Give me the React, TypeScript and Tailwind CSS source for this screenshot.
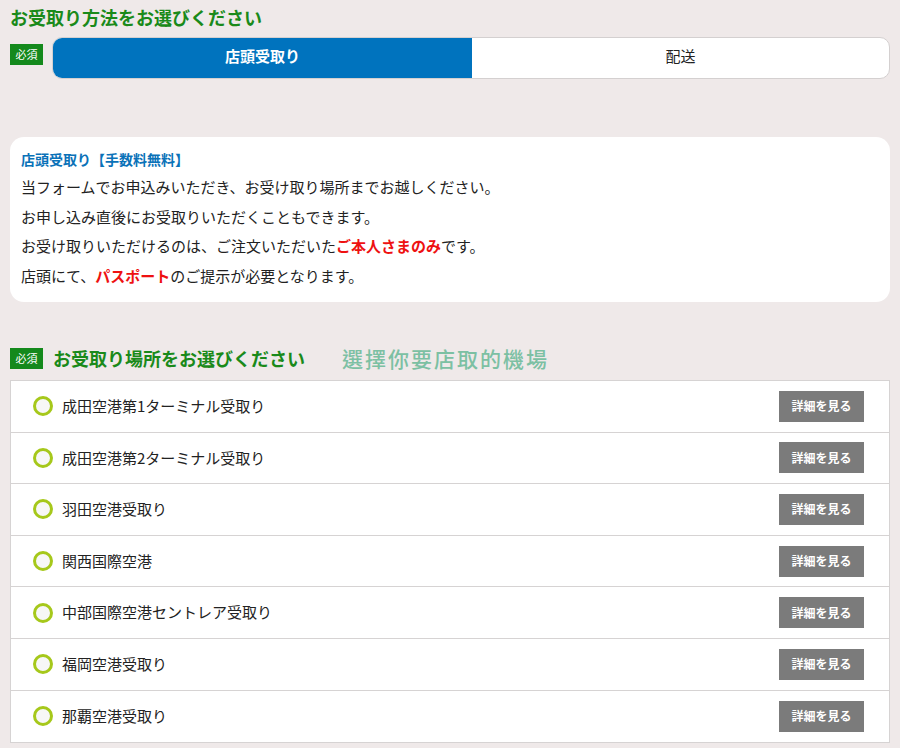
const font = {
  fontFamily: '"Noto Sans CJK JP", "Noto Sans", sans-serif',
};

const places = [
  "成田空港第1ターミナル受取り",
  "成田空港第2ターミナル受取り",
  "羽田空港受取り",
  "関西国際空港",
  "中部国際空港セントレア受取り",
  "福岡空港受取り",
  "那覇空港受取り",
];

function Required() {
  return (
    <span className="flex h-[21px] w-[33px] shrink-0 items-center justify-center bg-[#14891c] text-[11px] leading-none text-white">
      必須
    </span>
  );
}

export default function App() {
  return (
    <div
      className="min-h-[748px] w-[900px] bg-[#efe9e9] px-[10px] pt-[5px] text-[#222]"
      style={font}
    >
      {/* 受取り方法 */}
      <h2 className="text-[18px] font-bold leading-[24px] text-[#1a8a1a]">
        お受取り方法をお選びください
      </h2>
      <div className="mt-[8px] flex items-start gap-[9px]">
        <div className="mt-[7px]">
          <Required />
        </div>
        <div className="flex h-[42px] flex-1 overflow-hidden rounded-[10px] border border-[#d4d0d0] bg-white">
          <button className="flex w-[419px] items-center justify-center pb-[3px] bg-[#0073be] text-[15px] font-bold text-white">
            店頭受取り
          </button>
          <button className="flex flex-1 items-center justify-center pb-[3px] text-[15px] text-[#222]">
            配送
          </button>
        </div>
      </div>

      {/* 説明 */}
      <div className="mt-[58px] rounded-[14px] bg-white px-[11px] pb-[12px] pt-[12px]">
        <p className="text-[14px] font-bold leading-[20px] text-[#0a72b8]">
          店頭受取り【手数料無料】
        </p>
        <div className="mt-[3px] text-[15px] leading-[29.5px]">
          <p>当フォームでお申込みいただき、お受け取り場所までお越しください。</p>
          <p>お申し込み直後にお受取りいただくこともできます。</p>
          <p>
            お受け取りいただけるのは、ご注文いただいた
            <span className="font-bold text-[#ee1111]">ご本人さまのみ</span>
            です。
          </p>
          <p>
            店頭にて、
            <span className="font-bold text-[#ee1111]">パスポート</span>
            のご提示が必要となります。
          </p>
        </div>
      </div>

      {/* 受取り場所 */}
      <div className="mt-[44px] flex items-center">
        <Required />
        <h2 className="ml-[10px] text-[18px] font-bold leading-[24px] text-[#1a8a1a]">
          お受取り場所をお選びください
        </h2>
        <span
          className="ml-[37px] text-[21px] font-medium leading-[24px] tracking-[2px] text-[#7cc0a3]"
          style={{ fontFamily: '"Noto Sans CJK TC", sans-serif' }}
        >
          選擇你要店取的機場
        </span>
      </div>

      <ul className="mt-[10px] border border-[#d6d3d3] bg-white">
        {places.map((p, i) => (
          <li
            key={p}
            className={
              "flex h-[51.6px] items-center pl-[22px] pr-[25px] " +
              (i < places.length - 1 ? "border-b border-[#d6d3d3]" : "")
            }
          >
            <span className="h-[20px] w-[20px] shrink-0 rounded-full border-[3px] border-[#a6c81b] bg-[#f7f7f7]" />
            <span className="ml-[9px] flex-1 text-[15px]">{p}</span>
            <button className="flex h-[31px] w-[85px] items-center justify-center bg-[#7b7b7b] text-[12px] font-bold text-white">
              詳細を見る
            </button>
          </li>
        ))}
      </ul>
    </div>
  );
}
